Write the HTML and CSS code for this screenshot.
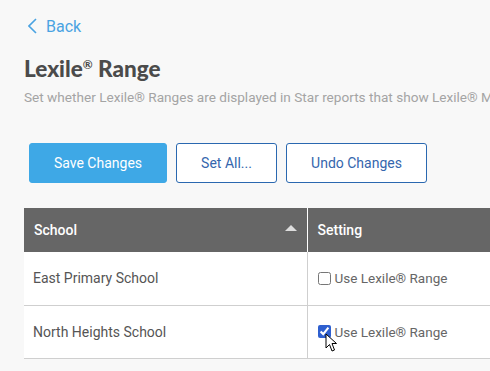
FILE: index.html
```html
<!DOCTYPE html>
<html lang="en">
<head>
    <meta charset="UTF-8">
    <title>Lexile Range</title>
    <link rel="stylesheet" href="styles.css">
</head>
<body>
<div class="page">
    <a class="back" href="#">
        <svg width="9" height="16" viewBox="0 0 9 16"><polyline points="8,1 1,8 8,15" fill="none" stroke="#4aa3e2" stroke-width="1.6"/></svg>
        <span>Back</span>
    </a>
    <h1 class="title">Lexile<sup>®</sup> Range</h1>
    <p class="desc">Set whether Lexile® Ranges are displayed in Star reports that show Lexile® Measures.</p>

    <div class="actions">
        <button class="btn btn-primary">Save Changes</button>
        <button class="btn btn-set">Set All...</button>
        <button class="btn btn-undo">Undo Changes</button>
    </div>

    <table class="grid">
        <thead>
        <tr>
            <th class="col-school">School <span class="sort"></span></th>
            <th>Setting</th>
        </tr>
        </thead>
        <tbody>
        <tr>
            <td class="col-school">East Primary School</td>
            <td><label class="check"><input type="checkbox"> Use Lexile® Range</label></td>
        </tr>
        <tr>
            <td class="col-school">North Heights School</td>
            <td>
                <label class="check"><input type="checkbox" checked> Use Lexile® Range</label>
                <svg class="cursor" width="13" height="20" viewBox="0 0 13 20"><path d="M1,1 L1,15 L4.5,11.5 L7,18 L9.5,17 L7,10.5 L11.5,10.5 Z" fill="#fff" stroke="#000" stroke-width="1" stroke-linejoin="round"/></svg>
            </td>
        </tr>
        </tbody>
    </table>
</div>
</body>
</html>
```

FILE: styles.css
```css
*{
    padding: 0;
    margin: 0;
    box-sizing: border-box;
}
body{
    background-color: #f8f8f8;
    font-family: Roboto, "Liberation Sans", sans-serif;
    overflow: hidden;
}
.page{
    padding: 16px 0 0 24px;
    width: 620px;
}
.back{
    display: flex;
    align-items: center;
    gap: 9px;
    padding-left: 4px;
    color: #4aa3e2;
    text-decoration: none;
    font-size: 16px;
    height: 20px;
}
.title{
    margin-top: 20px;
    font-family: Lato, "Open Sans", sans-serif;
    font-weight: 900;
    font-size: 22.5px;
    color: #4b4b4b;
    line-height: 26px;
}
.title sup{
    font-size: 12px;
    font-weight: 700;
    vertical-align: 8px;
    line-height: 0;
}
.desc{
    margin-top: 6px;
    font-size: 13.6px;
    color: #a4a4a4;
    white-space: nowrap;
    line-height: 18px;
}
.actions{
    display: flex;
    gap: 9px;
    margin-top: 37px;
    padding-left: 5px;
}
.btn{
    height: 40px;
    padding: 0;
    border: 1px solid #2a68b0;
    border-radius: 3px;
    background-color: #ffffff;
    color: #3566ad;
    font-family: Roboto, "Liberation Sans", sans-serif;
    font-size: 14px;
    white-space: nowrap;
}
.btn-primary{
    width: 138px;
    background-color: #3ea8e6;
    border-color: #3ea8e6;
    color: #ffffff;
}
.btn-set{
    width: 101px;
}
.btn-undo{
    width: 141px;
}
.grid{
    margin-top: 25px;
    width: 590px;
    border-collapse: collapse;
}
.grid th{
    height: 44px;
    background-color: #666666;
    color: #ffffff;
    font-size: 14px;
    font-weight: 500;
    text-align: left;
    padding-left: 10px;
    position: relative;
}
.grid th + th{
    border-left: 1px solid #ffffff;
}
.col-school{
    width: 283px;
}
.sort{
    position: absolute;
    right: 10px;
    top: 17px;
    border-left: 6px solid transparent;
    border-right: 6px solid transparent;
    border-bottom: 6px solid #dddddd;
}
.grid td{
    height: 53px;
    background-color: #ffffff;
    border-bottom: 1px solid #cfcfcf;
    font-size: 14px;
    color: #555555;
    padding-left: 9px;
    position: relative;
}
.grid td + td{
    border-left: 1px solid #cfcfcf;
    padding-left: 10px;
}
.check{
    display: flex;
    align-items: center;
    gap: 4px;
    font-size: 13.5px;
    color: #666666;
}
.check input{
    width: 13px;
    height: 13px;
    margin: 0;
    accent-color: #2e5fcf;
}
.cursor{
    position: absolute;
    left: 17px;
    top: 27px;
}
```
